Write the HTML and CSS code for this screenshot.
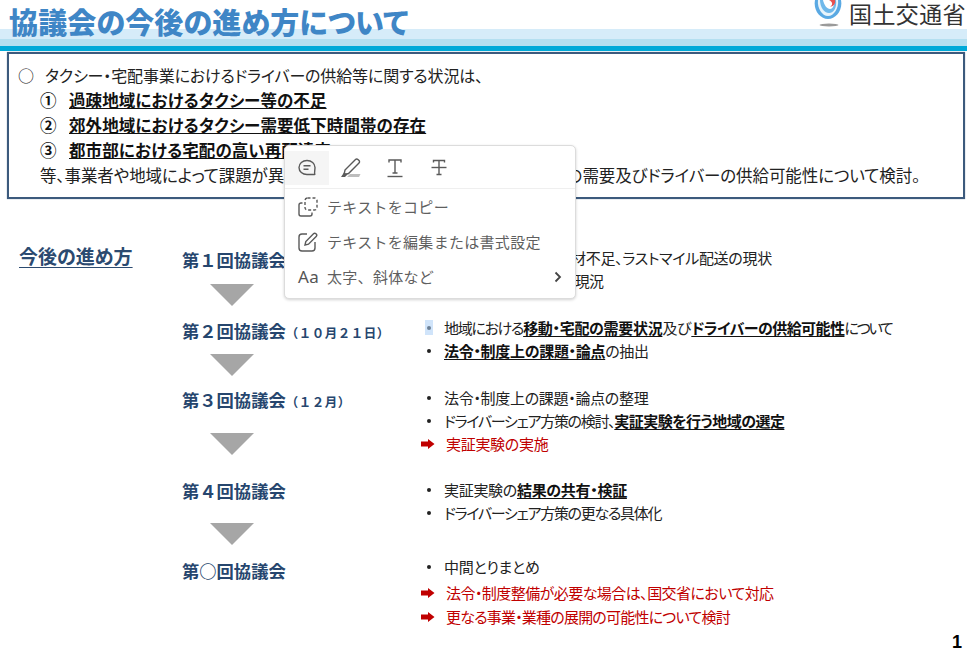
FILE: index.html
```html
<!DOCTYPE html>
<html lang="ja">
<head>
<meta charset="utf-8">
<title>協議会の今後の進め方について</title>
<link rel="stylesheet" href="styles.css">
</head>
<body>
<div class="slide">
  <header class="header">
    <h1 class="title">協議会の今後の進め方について</h1>
    <div class="brand">
      <svg class="logo" width="28" height="28" viewBox="0 0 28 28">
        <ellipse cx="15" cy="25" rx="9.500" ry="1.500" fill="#9a9a9a"/>
        <path d="M1 0C-1 10 6 19 14 19C22 19 29 10 27 0Z" fill="#5aa9e3"/>
        <path d="M4 0C3 8 8 16 14 16C20 16 25 8 24 0Z" fill="#e8f4fb"/>
        <path d="M6 0C6 7 10 13 15 13C20 13 23 7 22 0Z" fill="#6fb8ea"/>
        <path d="M9 0C10 5 13 9 16 9C19 9 21 4 20 0Z" fill="#fff"/>
        <path d="M15 0C19 2 19 5 16 7C20 6 22 3 21 0Z" fill="#e8504f"/>
      </svg>
      <span class="ministry">国土交通省</span>
    </div>
  </header>

  <section class="summary">
    <p class="line"><span class="mark-o">○</span>タクシー・宅配事業におけるドライバーの供給等に関する状況は、</p>
    <p class="line sub strong"><span class="num">①</span><u>過疎地域におけるタクシー等の不足</u></p>
    <p class="line sub strong"><span class="num">②</span><u>郊外地域におけるタクシー需要低下時間帯の存在</u></p>
    <p class="line sub strong"><span class="num">③</span><u>都市部における宅配の高い再配達率</u></p>
    <p class="line sub last">等、事業者や地域によって課題が異なることで、地域における人の移動・宅配の需要及びドライバーの供給可能性について検討。</p>
  </section>

  <section class="plan">
    <h2 class="plan-title">今後の進め方</h2>
    <div class="steps">
      <div class="step h70">
        <div class="step-left">
          <div class="step-name">第１回協議会</div>
          <div class="tri t1"></div>
        </div>
        <ul class="items">
          <li class="dot">タクシー事業等の人材不足、ラストマイル配送の現状</li>
          <li class="dot"><span class="mid">ドライバーの働き方の現況</span></li>
        </ul>
      </div>
      <div class="step h70">
        <div class="step-left down1">
          <div class="step-name">第２回協議会<small>（１０月２１日）</small></div>
          <div class="tri t2"></div>
        </div>
        <ul class="items">
          <li class="dot selected"><span class="kana">地域における</span><b>移動・宅配の需要状況</b>及び<b class="snug">ドライバーの供給可能性</b><span class="tight">について</span></li>
          <li class="dot"><b>法令・制度上の課題・論点</b>の抽出</li>
        </ul>
      </div>
      <div class="step h92">
        <div class="step-left">
          <div class="step-name">第３回協議会<small>（１２月）</small></div>
          <div class="tri t3"></div>
        </div>
        <ul class="items">
          <li class="dot">法令・制度上の課題・論点の整理</li>
          <li class="dot"><span class="kana">ドライバーシェア方策の検討、</span><b class="snug">実証実験を行う地域の選定</b></li>
          <li class="arrow">
            <svg class="arrow-icon" width="14" height="10" viewBox="0 0 14 10"><path d="M0 2.500H7V0L13.500 5L7 10V7.500H0Z" fill="#c00000"/></svg>実証実験の実施</li>
        </ul>
      </div>
      <div class="step h77">
        <div class="step-left up1">
          <div class="step-name">第４回協議会</div>
          <div class="tri t4"></div>
        </div>
        <ul class="items">
          <li class="dot">実証実験の<b>結果の共有・検証</b></li>
          <li class="dot"><span class="kana">ドライバーシェア方策の更なる具体化</span></li>
        </ul>
      </div>
      <div class="step">
        <div class="step-left down2">
          <div class="step-name">第○回協議会</div>
        </div>
        <ul class="items wide">
          <li class="dot">中間とりまとめ</li>
          <li class="arrow">
            <svg class="arrow-icon" width="14" height="10" viewBox="0 0 14 10"><path d="M0 2.500H7V0L13.500 5L7 10V7.500H0Z" fill="#c00000"/></svg><span class="snug">法令・制度整備が必要な場合は、国交省において対応</span></li>
          <li class="arrow">
            <svg class="arrow-icon" width="14" height="10" viewBox="0 0 14 10"><path d="M0 2.500H7V0L13.500 5L7 10V7.500H0Z" fill="#c00000"/></svg><span class="mid">更なる事業・業種の展開の可能性について検討</span></li>
        </ul>
      </div>
    </div>
  </section>

  <div class="page-no">1</div>

  <div class="popup">
    <div class="toolbar">
      <div class="tool active">
        <svg width="20" height="18" viewBox="0 0 20 18" fill="none" stroke="#5a5a5a" stroke-width="1.400">
          <path d="M10 1.500C5.500 1.500 2 4.500 2 8.500C2 12.500 5.500 15.500 10 15.500H17.500C17.900 15.500 18 15.200 17.800 14.900C17.200 13.800 18 11 18 8.500C18 4.500 14.500 1.500 10 1.500Z"/>
          <path d="M6.500 6.800H13.500M6.500 10.200H11.500"/>
        </svg>
      </div>
      <div class="tool">
        <svg width="22" height="20" viewBox="0 0 22 20" fill="none" stroke="#5a5a5a" stroke-width="1.400">
          <path d="M5 12L15.500 1.500C16.200 .8 17.200 .8 17.900 1.500L19 2.600C19.700 3.300 19.700 4.300 19 5L8.500 15.500L4 16.500Z"/>
          <path d="M7 19H19L20.500 16H10Z" fill="#bdbdbd" stroke="none"/>
          <path d="M1 19L4 14.500L7.500 16.500L5 19Z" fill="#5a5a5a" stroke="none"/>
        </svg>
      </div>
      <div class="tool">
        <svg width="18" height="20" viewBox="0 0 18 20" fill="none" stroke="#5a5a5a" stroke-width="1.400">
          <path d="M3 4.500V2H15V4.500M9 2V15M6.500 15H11.500"/>
          <path d="M1.500 18.500H16.500"/>
        </svg>
      </div>
      <div class="tool">
        <svg width="16" height="18" viewBox="0 0 16 18" fill="none" stroke="#5a5a5a" stroke-width="1.400">
          <path d="M2.500 3.500V1.500H13.500V3.500M8 1.500V15.500M5.500 15.500H10.500"/>
          <path d="M.5 8.500H15.500"/>
        </svg>
      </div>
    </div>
    <ul class="menu">
      <li class="menu-row">
        <svg class="menu-icon" width="20" height="20" viewBox="0 0 20 20" fill="none" stroke="#5a5a5a" stroke-width="1.400">
          <rect x="7" y="1" width="12" height="12" rx="2.500" stroke-dasharray="3 2"/>
          <path d="M4.500 6H3C1.900 6 1 6.900 1 8V17C1 18.100 1.900 19 3 19H12C13.100 19 14 18.100 14 17V15.500"/>
        </svg>
        <span>テキストをコピー</span>
      </li>
      <li class="menu-row">
        <svg class="menu-icon" width="20" height="20" viewBox="0 0 20 20" fill="none" stroke="#5a5a5a" stroke-width="1.400">
          <path d="M9 2H4C2.300 2 1 3.300 1 5V16C1 17.700 2.300 19 4 19H14C15.700 19 17 17.700 17 16V10"/>
          <path d="M7 13L7.800 9.500L15.500 1.800C16.200 1.100 17.200 1.100 17.900 1.800L18.200 2.100C18.900 2.800 18.900 3.800 18.200 4.500L10.500 12.200Z"/>
        </svg>
        <span>テキストを編集または書式設定</span>
      </li>
      <li class="menu-row">
        <span class="aa">Aa</span>
        <span>太字、斜体など</span>
        <svg class="chev" width="8" height="12" viewBox="0 0 8 12" fill="none" stroke="#444" stroke-width="1.800"><path d="M1.500 1.500L6 6L1.500 10.500"/></svg>
      </li>
    </ul>
  </div>
</div>
</body>
</html>
```

FILE: styles.css
```css
* { box-sizing: border-box; }
html, body { margin: 0; padding: 0; background: #fff; }
body {
  font-family: "Noto Sans CJK JP", "Noto Sans", sans-serif;
  font-feature-settings: "palt";
  color: #222;
}
.slide { position: relative; width: 967px; height: 662px; overflow: hidden; }

.header {
  height: 52px;
  padding: 0 1px 0 9px;
  display: flex;
  justify-content: space-between;
  align-items: flex-start;
  background: linear-gradient(to bottom, #fff 0, #fff 29px, #d6ecf9 29px, #d6ecf9 39px, #b4dff0 39px, #b4dff0 46px, #00a9d8 46px, #00a9d8 51px, #fff 51px);
}
.title {
  margin: 0;
  font-size: 29px;
  line-height: 42px;
  font-weight: 900;
  color: #3f86c6;
  letter-spacing: .15px;
}
.brand { display: flex; align-items: flex-start; gap: 7px; }
.logo { display: block; }
.ministry {
  font-size: 23px;
  line-height: 27px;
  color: #333;
  letter-spacing: .4px;
  font-feature-settings: normal;
}

.summary {
  margin: 0 2px 0 7px;
  height: 147px;
  padding: 9px 0 0 9px;
  border: 2px solid #3c5a7d;
  box-shadow: 0 0 1px #7d93ad;
}
.line { margin: 0; font-size: 16px; line-height: 25px; white-space: nowrap; letter-spacing: -.15px; }
.sub { padding-left: 22px; }
.strong { font-size: 16.500px; font-weight: 700; color: #111; letter-spacing: .1px; }
.last { font-size: 16.500px; letter-spacing: -.1px; }
.mark-o { display: inline-block; width: 27px; font-weight: 400; }
.num { display: inline-block; width: 29px; }

.plan { position: relative; display: flex; padding: 48px 0 0 19px; }
.plan-title {
  margin: 0;
  width: 163px;
  font-size: 19px;
  line-height: 18px;
  font-weight: 700;
  color: #2b4a70;
  text-decoration: underline;
  text-underline-offset: 3px;
}
.steps { display: flex; flex-direction: column; }
.step { display: flex; }
.h70 { height: 70px; }
.h92 { height: 92px; }
.h77 { height: 77px; }
.step-left { width: 240px; padding-top: 2px; }
.down1 { padding-top: 3px; }
.down2 { padding-top: 4px; }
.up1 { padding-top: 1px; }
.step-name {
  font-size: 17.300px;
  line-height: 22px;
  font-weight: 700;
  color: #26466e;
  white-space: nowrap;
  font-feature-settings: normal;
}
.step-name small { font-size: 12.500px; letter-spacing: .5px; }
.tri {
  margin-left: 28px;
  width: 0; height: 0;
  border-left: 22px solid transparent;
  border-right: 22px solid transparent;
  border-top: 22px solid #a6a6a6;
}
.t1 { margin-top: 13px; }
.t2 { margin-top: 10px; }
.t3 { margin-top: 20px; }
.t4 { margin-top: 21px; }

.items { margin: 0 0 0 -1px; padding: 0; list-style: none; font-size: 15px; line-height: 22.500px; white-space: nowrap; letter-spacing: -.3px; }
.items b { font-weight: 700; color: #111; text-decoration: underline; text-underline-offset: 2px; }
.kana { letter-spacing: -1.3px; }
.tight { letter-spacing: -2.300px; }
.mid { letter-spacing: -.8px; }
.items .snug { letter-spacing: -.55px; }
.dot { position: relative; padding-left: 23px; }
.dot::before {
  content: "";
  position: absolute;
  left: 6px; top: 9px;
  width: 4px; height: 4px;
  border-radius: 50%;
  background: #222;
}
.selected::after {
  content: "";
  position: absolute;
  left: 4px; top: 3px;
  width: 8px; height: 15px;
  background: #a9cdf5;
  opacity: .55;
}
.arrow { color: #c00000; display: flex; align-items: center; line-height: 24px; }
.arrow-icon { margin-right: 11px; flex: none; }
.wide .arrow { line-height: 24.500px; }
.wide .dot { margin-bottom: 2px; }

.page-no {
  position: absolute;
  right: 5px; top: 632px;
  font-family: "Liberation Sans", sans-serif;
  font-size: 18px;
  line-height: 20px;
  font-weight: 700;
  color: #000;
}

.popup {
  position: absolute;
  left: 284px; top: 145px;
  width: 292px; height: 154px;
  padding: 5px 0 0;
  background: #fff;
  border: 1px solid #dcdcdc;
  border-radius: 5px;
  box-shadow: 0 1px 3px rgba(0,0,0,.18);
  color: #5f5f5f;
  font-feature-settings: normal;
}
.toolbar {
  height: 38px;
  padding-bottom: 3px;
  display: flex;
  border-bottom: 1px solid #efefef;
}
.tool { width: 44px; height: 34px; display: flex; align-items: center; justify-content: center; }
.tool.active { background: #f5f5f5; }
.menu { margin: 0; padding: 0; list-style: none; }
.menu-row {
  position: relative;
  height: 35px;
  padding-left: 13px;
  display: flex;
  align-items: center;
  font-size: 15px;
  letter-spacing: .3px;
  white-space: nowrap;
}
.menu-icon { margin-right: 9px; flex: none; }
.aa { width: 29px; font-family: "Noto Sans", sans-serif; font-size: 17px; letter-spacing: .5px; color: #555; }
.chev { position: absolute; right: 13px; top: 12px; }
```
